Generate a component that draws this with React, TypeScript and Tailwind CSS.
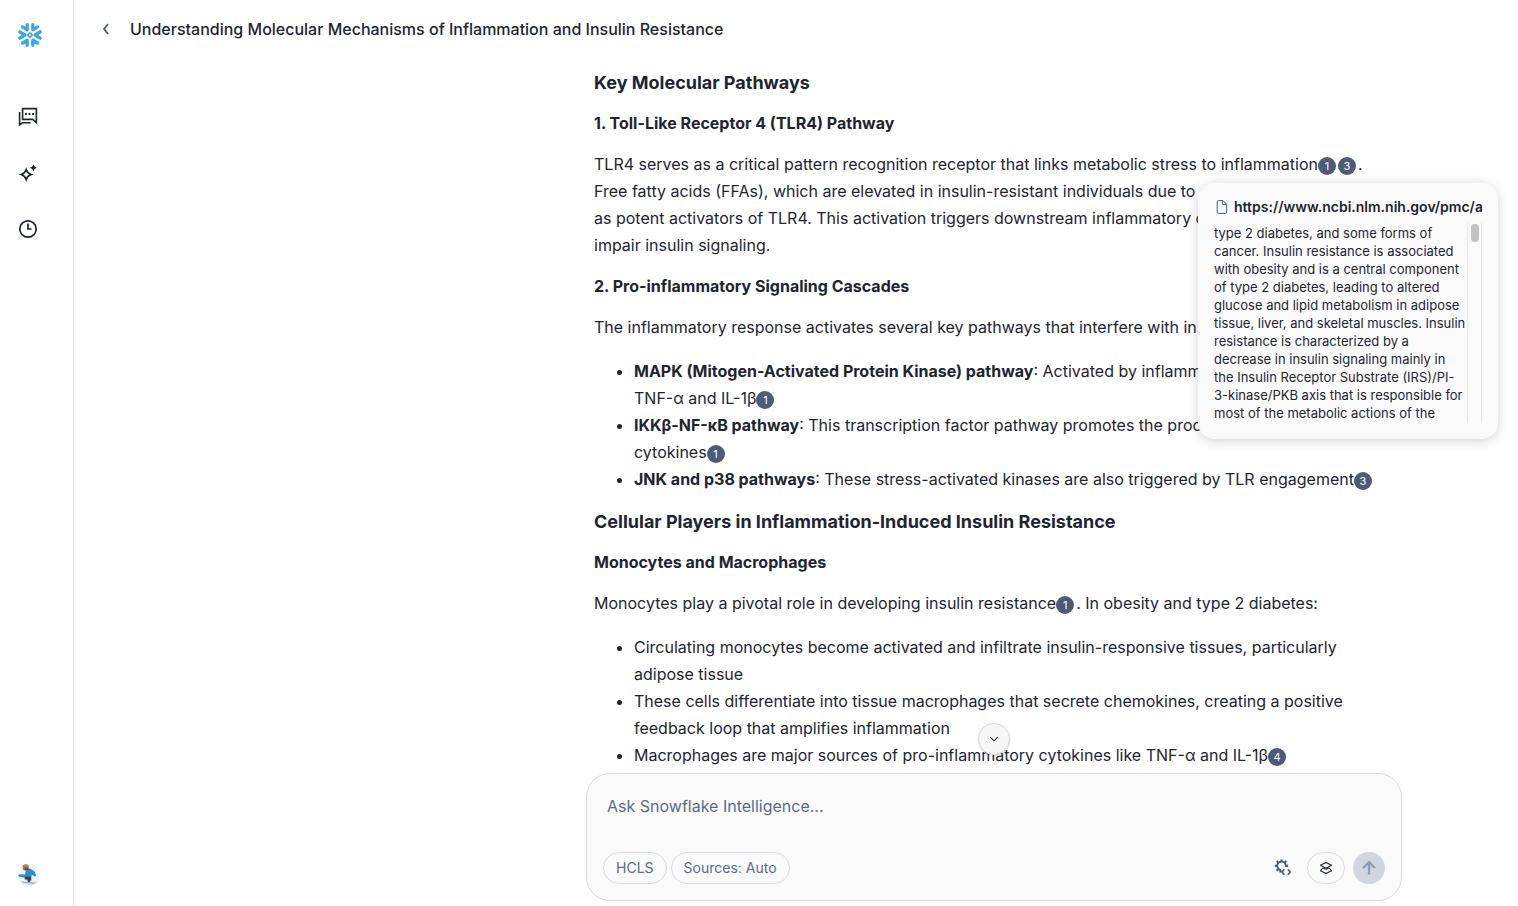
import type { ReactNode } from "react";

function Cite({ n }: { n: number }) {
  return (
    <button
      type="button"
      className="mr-[2px] inline-flex size-[18px] items-center justify-center rounded-full bg-[#4f5b76] align-baseline text-[11px] leading-[18px] text-white"
    >
      {n}
    </button>
  );
}

function List({ children }: { children: ReactNode }) {
  return <ul className="mt-[17px] mb-[15px] list-disc pl-10">{children}</ul>;
}

function SnowflakeLogo() {
  return (
    <svg viewBox="0 0 26 26" className="size-[26px]" fill="none" stroke="#3aa8e0" strokeWidth="3.3" strokeLinecap="round" strokeLinejoin="round">
      {[0, 180].map((a) => (
        <g key={a} transform={`rotate(${a} 13 13)`}>
          <path d="M2.8 9.8 L7.9 13 L2.8 16.2" />
          <path d="M5.4 4.9 L10.2 7.7 V2.7" />
          <path d="M20.6 4.9 L15.8 7.7 V2.7" />
        </g>
      ))}
      <rect x="11.3" y="11.3" width="3.4" height="3.4" rx="0.6" strokeWidth="1.7" transform="rotate(45 13 13)" />
    </svg>
  );
}

function ChatIcon() {
  return (
    <svg viewBox="0 0 20 20" className="size-5" fill="none" stroke="#1e252f" strokeWidth="1.6">
      <path d="M4.6 1.6 H18.4 V15.6 L14.8 12.4 H4.6 Z" />
      <path d="M1.6 5 V17.8 L4.6 15.8 H12.6" />
      <path d="M7 7h1.8M10.6 7h1.8M14.1 7h1.8" strokeWidth="1.8" />
    </svg>
  );
}

function SparkleIcon() {
  return (
    <svg viewBox="0 0 20 20" className="size-5" fill="none" stroke="#1e252f" strokeWidth="1.6">
      <path d="M8.2 6.6 Q9.4 10.4 13.2 11.6 Q9.4 12.8 8.2 16.6 Q7 12.8 3.2 11.6 Q7 10.4 8.2 6.6 Z" />
      <path d="M15.4 1.4 L16.6 3.6 L18.8 4.8 L16.6 6 L15.4 8.2 L14.2 6 L12 4.8 L14.2 3.6 Z" fill="#1e252f" stroke="none" />
    </svg>
  );
}

function ClockIcon() {
  return (
    <svg viewBox="0 0 20 20" className="size-5" fill="none" stroke="#1e252f" strokeWidth="1.7">
      <circle cx="10" cy="10" r="8.2" />
      <path d="M10 4.6 V10 H13.6" />
    </svg>
  );
}

function Avatar() {
  return (
    <svg viewBox="0 0 24 24" className="size-6">
      <circle cx="12" cy="12" r="11.5" fill="#f1f5f9" />
      <path d="M3 17.5 Q9 21 19 18 L20 20 Q12 24 5 20 Z" fill="#d3dde8" />
      <path d="M1 12.2 L3 11.2 L8 11.6 L8.6 7.2 L13 5.6 L17.4 8.2 L19.2 12.6 L17.4 13.4 L14.8 11.4 L14.4 14.4 L8.4 14.8 L2 13.8 Z" fill="#2a8fc9" />
      <path d="M7.6 13.8 L14 13.4 L14.4 16.4 L12.4 19.6 L10.4 18.6 L10.6 16.8 L7.8 16.6 Z" fill="#3b3f4a" />
      <circle cx="8.8" cy="4.4" r="3.2" fill="#a3824e" />
      <path d="M7.2 4.8h4v2.2H8z" fill="#5a4b38" />
      <path d="M5 18.8 L17 20.4" stroke="#9aa8b8" strokeWidth="1" />
    </svg>
  );
}

function GearCodeIcon() {
  return (
    <svg viewBox="0 0 18 18" className="size-[18px]" fill="none" stroke="#4f5b76" strokeWidth="1.7">
      <path d="M7.2 11.2 A4.3 4.3 0 1 1 11.8 7.6" />
      <path
        d="M7.5 0.4 V3 M2.7 2.1 L4.6 4 M0.8 6.9 H3.4 M2.7 11.7 L4.6 9.8 M12.3 2.1 L10.4 4 M11.6 6.9 H14.2 M6.4 11 V13.4"
        strokeWidth="2.1"
      />
      <path d="M10.4 10.2 L7.9 13 L10.4 15.8 M13.8 10.2 L16.3 13 L13.8 15.8" />
    </svg>
  );
}

function LayersIcon() {
  return (
    <svg viewBox="0 0 16 16" className="size-4" fill="none" stroke="#1e252f" strokeWidth="1.1" strokeLinejoin="round">
      <path d="M8 2.4 L13.5 5.3 L8 8.2 L2.5 5.3 Z" />
      <path d="M5 8 L2.5 10.7 L8 13.6 L13.5 10.7 L11 8 L8 9.2 Z" />
    </svg>
  );
}

function FileIcon() {
  return (
    <svg viewBox="0 0 12 14" className="h-[14px] w-3 shrink-0" fill="none" stroke="#4f5b76" strokeWidth="1" strokeLinejoin="round">
      <path d="M2.4 0.6 H7 L10.6 4.2 V12.2 Q10.6 13.4 9.4 13.4 H2.4 Q1.2 13.4 1.2 12.2 V1.8 Q1.2 0.6 2.4 0.6 Z" />
      <path d="M6.6 0.6 V4.6 H10.6" />
    </svg>
  );
}

function Sidebar() {
  return (
    <nav className="flex w-[74px] shrink-0 flex-col border-r border-[#d5dae4] pb-[19px] pl-[17px]">
      <a href="#home" aria-label="Home" className="mt-[22px] block">
        <SnowflakeLogo />
      </a>
      <div className="mt-[59px] flex flex-col gap-9 pl-px">
        <a href="#chats" aria-label="Chats"><ChatIcon /></a>
        <a href="#explore" aria-label="Explore"><SparkleIcon /></a>
        <a href="#history" aria-label="History"><ClockIcon /></a>
      </div>
      <button type="button" aria-label="Account" className="mt-auto size-6">
        <Avatar />
      </button>
    </nav>
  );
}

function Article() {
  return (
    <article className="space-y-[14px] px-2 text-base leading-[27px]">
      <h3 className="text-lg leading-[27px] font-bold">Key Molecular Pathways</h3>
      <h4 className="font-bold">1. Toll-Like Receptor 4 (TLR4) Pathway</h4>
      <p>
        TLR4 serves as a critical pattern recognition receptor that links metabolic stress to inflammation
        <Cite n={1} />
        <Cite n={3} />
        . <br />
        Free fatty acids (FFAs), which are elevated in insulin-resistant individuals due to obesity, act
        <br />
        as potent activators of TLR4. This activation triggers downstream inflammatory cascades that
        <br />
        impair insulin signaling.
      </p>
      <h4 className="font-bold">2. Pro-inflammatory Signaling Cascades</h4>
      <p>The inflammatory response activates several key pathways that interfere with insulin action:</p>
      <List>
        <li>
          <strong>MAPK (Mitogen-Activated Protein Kinase) pathway</strong>: Activated by inflammation,
          <br />
          TNF-α and IL-1β
          <Cite n={1} />
        </li>
        <li>
          <strong>IKKβ-NF-κB pathway</strong>: This transcription factor pathway promotes the production of
          <br />
          cytokines
          <Cite n={1} />
        </li>
        <li>
          <strong>JNK and p38 pathways</strong>: These stress-activated kinases are also triggered by TLR engagement
          <Cite n={3} />
        </li>
      </List>
      <h3 className="text-lg leading-[27px] font-bold">Cellular Players in Inflammation-Induced Insulin Resistance</h3>
      <h4 className="font-bold">Monocytes and Macrophages</h4>
      <p>
        Monocytes play a pivotal role in developing insulin resistance
        <Cite n={1} />. In obesity and type 2 diabetes:
      </p>
      <List>
        <li>
          Circulating monocytes become activated and infiltrate insulin-responsive tissues, particularly
          <br />
          adipose tissue
        </li>
        <li>
          These cells differentiate into tissue macrophages that secrete chemokines, creating a positive
          <br />
          feedback loop that amplifies inflammation
        </li>
        <li>
          Macrophages are major sources of pro-inflammatory cytokines like TNF-α and IL-1β
          <Cite n={4} />
        </li>
      </List>
    </article>
  );
}

function SourceCard() {
  return (
    <aside className="absolute top-[183px] right-5 w-[300px] rounded-2xl bg-[#fafafa] p-4 shadow-[0_2px_12px_rgba(30,37,47,0.2)]">
      <div className="flex h-4 items-center gap-[6px] overflow-hidden pl-[2px]">
        <FileIcon />
        <a href="https://www.ncbi.nlm.nih.gov/pmc/a" className="text-sm font-semibold whitespace-nowrap">
          https://www.ncbi.nlm.nih.gov/pmc/a
        </a>
      </div>
      <div className="mt-2 flex h-[200px]">
        <p className="min-w-0 flex-1 overflow-hidden pt-px text-[13px] leading-[18px]">
          type 2 diabetes, and some forms of cancer. Insulin resistance is associated with obesity and is a central
          component of type 2 diabetes, leading to altered glucose and lipid metabolism in adipose tissue, liver, and
          skeletal muscles. Insulin resistance is characterized by a decrease in insulin signaling mainly in the Insulin
          Receptor Substrate (IRS)/PI-3-kinase/PKB axis that is responsible for most of the metabolic actions of the
        </p>
        <div className="flex w-[15px] justify-center border-x border-[#e6e6e6] pt-px">
          <div className="h-[18px] w-2 rounded-full bg-[#c1c1c1]" />
        </div>
      </div>
    </aside>
  );
}

function Composer() {
  return (
    <form className="rounded-[24px] border border-[#d5dae4] bg-[#fafafa] p-4">
      <textarea
        aria-label="Message"
        rows={1}
        placeholder="Ask Snowflake Intelligence..."
        className="block h-[62px] w-full resize-none bg-transparent px-1 pt-1 text-base leading-6 outline-none placeholder:text-[#5d6a85]"
      />
      <div className="flex items-center gap-1 text-sm text-[#5d6a85]">
        <button type="button" className="h-8 rounded-full border border-[#d5dae4] px-3">HCLS</button>
        <button type="button" className="h-8 rounded-full border border-[#d5dae4] px-3">Sources: Auto</button>
        <div className="ml-auto flex items-center gap-2">
          <button type="button" aria-label="Tools" className="flex size-8 items-center justify-center">
            <GearCodeIcon />
          </button>
          <button type="button" aria-label="Layers" className="flex h-8 w-[38px] items-center justify-center rounded-full border border-[#d5dae4]">
            <LayersIcon />
          </button>
          <button type="submit" aria-label="Send" className="flex size-8 items-center justify-center rounded-full bg-[#d0d5e0]">
            <svg viewBox="0 0 16 16" className="size-4" fill="none" stroke="#8e9cb5" strokeWidth="2.3">
              <path d="M8 14.6 V2.4 M2.2 8 L8 2.2 L13.8 8" />
            </svg>
          </button>
        </div>
      </div>
    </form>
  );
}

export default function App() {
  return (
    <div className="relative flex h-screen overflow-hidden bg-white font-['Inter','Noto_Sans',sans-serif] text-[#1e252f]">
      <Sidebar />
      <div className="flex min-w-0 flex-1 flex-col">
        <header className="flex h-[58px] shrink-0 items-center gap-[14px] pl-[22px]">
          <button type="button" aria-label="Back" className="flex size-5 items-center justify-center">
            <svg viewBox="0 0 16 16" className="size-4" fill="none" stroke="#4f5b76" strokeWidth="1.8">
              <path d="M10 3.2 L6 8 L10 12.8" />
            </svg>
          </button>
          <h1 className="text-base font-medium">Understanding Molecular Mechanisms of Inflammation and Insulin Resistance</h1>
        </header>
        <main className="flex min-h-0 flex-1 flex-col pt-[18px] pb-[5px] pl-[396px]">
          <div className="mx-auto flex min-h-0 w-full max-w-[816px] flex-1 flex-col">
            <div className="relative min-h-0 flex-1">
              <div className="h-full overflow-hidden">
                <div className="-mt-[7px]">
                  <Article />
                </div>
              </div>
              <button
                type="button"
                aria-label="Scroll down"
                className="absolute bottom-[18px] left-1/2 flex size-8 -translate-x-1/2 items-center justify-center rounded-full border border-[#d5dae4] bg-[#f7f7f7] shadow-sm"
              >
                <svg viewBox="0 0 16 16" className="size-4" fill="none" stroke="#1e252f" strokeWidth="1.1">
                  <path d="M4.2 6.2 L8 9.8 L11.8 6.2" />
                </svg>
              </button>
            </div>
            <Composer />
          </div>
        </main>
      </div>
      <SourceCard />
    </div>
  );
}
